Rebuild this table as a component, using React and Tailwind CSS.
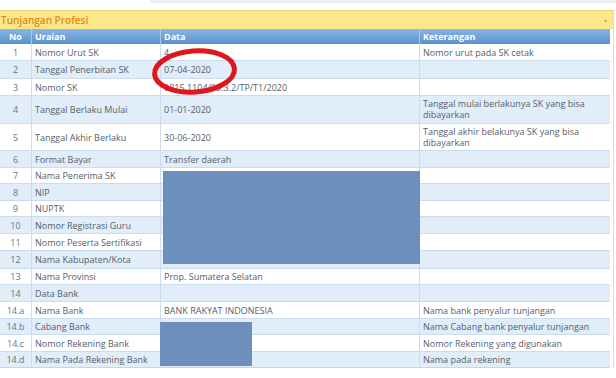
import React from 'react';

const rows = [
    { no: '1', uraian: 'Nomor Urut SK', data: '4', ket: 'Nomor urut pada SK cetak', h: 'h-[17px]' },
    { no: '2', uraian: 'Tanggal Penerbitan SK', data: '07-04-2020', ket: '', h: 'h-[18px]' },
    { no: '3', uraian: 'Nomor SK', data: '0815.1104/03.3.2/TP/T1/2020', ket: '', h: 'h-[17px]' },
    { no: '4', uraian: 'Tanggal Berlaku Mulai', data: '01-01-2020', ket: 'Tanggal mulai berlakunya SK yang bisa dibayarkan', h: 'h-[28px]' },
    { no: '5', uraian: 'Tanggal Akhir Berlaku', data: '30-06-2020', ket: 'Tanggal akhir belakunya SK yang bisa dibayarkan', h: 'h-[27px]' },
    { no: '6', uraian: 'Format Bayar', data: 'Transfer daerah', ket: '', h: 'h-[17px]' },
    { no: '7', uraian: 'Nama Penerima SK', data: '', ket: '', h: 'h-[16px]' },
    { no: '8', uraian: 'NIP', data: '', ket: '', h: 'h-[17px]' },
    { no: '9', uraian: 'NUPTK', data: '', ket: '', h: 'h-[16px]' },
    { no: '10', uraian: 'Nomor Registrasi Guru', data: '', ket: '', h: 'h-[17px]' },
    { no: '11', uraian: 'Nomor Peserta Sertifikasi', data: '', ket: '', h: 'h-[17px]' },
    { no: '12', uraian: 'Nama Kabupaten/Kota', data: '', ket: '', h: 'h-[18px]' },
    { no: '13', uraian: 'Nama Provinsi', data: 'Prop. Sumatera Selatan', ket: '', h: 'h-[16px]' },
    { no: '14', uraian: 'Data Bank', data: '', ket: '', h: 'h-[17px]' },
    { no: '14.a', uraian: 'Nama Bank', data: 'BANK RAKYAT INDONESIA', ket: 'Nama bank penyalur tunjangan', h: 'h-[17px]' },
    { no: '14.b', uraian: 'Cabang Bank', data: '', ket: 'Nama Cabang bank penyalur tunjangan', h: 'h-[16px]' },
    { no: '14.c', uraian: 'Nomor Rekening Bank', data: '', ket: 'Nomor Rekening yang digunakan', h: 'h-[17px]' },
    { no: '14.d', uraian: 'Nama Pada Rekening Bank', data: '', ket: 'Nama pada rekening', h: 'h-[15px]' },
];

const cols = 'grid grid-cols-[32px_129px_259px_190px]';

const App = () => {
    return (
        <div className="relative w-[616px] h-[378px] overflow-hidden bg-white font-['Open_Sans',sans-serif] text-[9px] text-[#56606b]">
            {/* top strip */}
            <div className="h-[10px] flex">
                <div className="w-[150px]" />
                <div className="flex-1 h-[3px] bg-[#ececec]" />
            </div>

            <div className="flex">
                <div className="w-[613px]">
                    {/* panel title */}
                    <div className="h-[19px] flex items-center justify-between bg-[#fce88a] border-t border-[#e7d67c] pl-[1px] pr-[5px]">
                        <span className="text-[10px] font-semibold text-[#e08a14] leading-none">Tunjangan Profesi</span>
                        <span className="text-[5px] text-[#a8a08a] leading-none">▲</span>
                    </div>

                    <div className="w-[610px] border-b border-[#c3d6ea]">
                        {/* header */}
                        <div className={`${cols} h-[15px] bg-gradient-to-b from-[#86b6e4] to-[#5b91cb] text-white font-bold text-[9px] leading-none`}>
                            <div className="flex items-center justify-center border-r border-[#a9c8ea]">No</div>
                            <div className="flex items-center pl-[3px] border-r border-[#a9c8ea]">Uraian</div>
                            <div className="flex items-center pl-[3px] border-r border-[#a9c8ea]">Data</div>
                            <div className="flex items-center pl-[3px]">Keterangan</div>
                        </div>

                        {rows.map((r, i) => (
                            <div
                                key={r.no}
                                className={`${cols} ${r.h} ${i < rows.length - 1 ? 'border-b border-[#cadcee]' : ''} ${i % 2 === 1 ? 'bg-[#e1edf9]' : 'bg-white'} leading-[11px]`}
                            >
                                <div className="flex items-center justify-center border-r border-[#cadcee] text-[#6a7480]">{r.no}</div>
                                <div className="flex items-center pl-[3px] border-r border-[#cadcee] whitespace-nowrap">{r.uraian}</div>
                                <div className="flex items-center pl-[3px] border-r border-[#cadcee] whitespace-nowrap">{r.data}</div>
                                <div className={`flex pl-[3px] pr-[20px] ${r.ket.length > 36 ? 'items-start pt-[2px]' : 'items-center'}`}>{r.ket}</div>
                            </div>
                        ))}
                    </div>
                </div>
                <div className="w-[1px] bg-[#dcdcdc]" />
                <div className="flex-1 bg-white" />
            </div>

            {/* red hand-drawn circle over the date */}
            <svg className="absolute left-[150px] top-[46px]" width="90" height="52" viewBox="0 0 90 52">
                <ellipse cx="44.5" cy="25.5" rx="40" ry="20.5" fill="none" stroke="#e0161f" strokeWidth="5" transform="rotate(-4 44.5 25.5)" />
            </svg>

            {/* redacted blocks */}
            <div className="absolute left-[163px] top-[171px] w-[257px] h-[93px] bg-[#6d8fbc]" />
            <div className="absolute left-[160px] top-[322px] w-[92px] h-[44px] bg-[#6d8fbc]" />
        </div>
    );
};

export default App;
